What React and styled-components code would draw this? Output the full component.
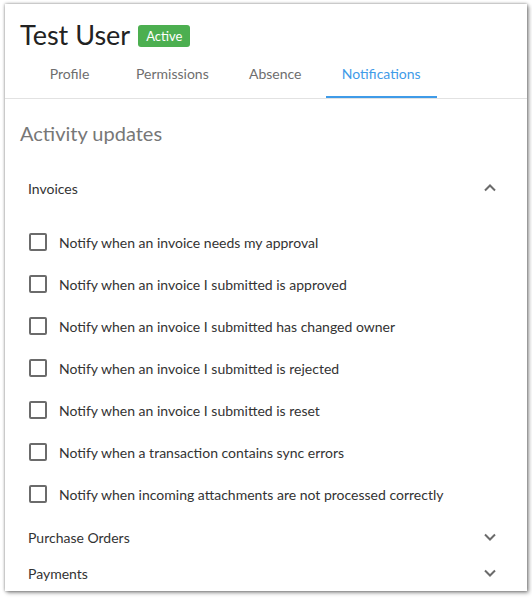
import React from 'react';
import styled, { createGlobalStyle } from 'styled-components';

const GlobalStyle = createGlobalStyle`
  html, body {
    margin: 0;
    padding: 0;
    background: #ffffff;
    font-family: Lato, "Open Sans", Arial, sans-serif;
  }
`;

const invoiceOptions = [
  'Notify when an invoice needs my approval',
  'Notify when an invoice I submitted is approved',
  'Notify when an invoice I submitted has changed owner',
  'Notify when an invoice I submitted is rejected',
  'Notify when an invoice I submitted is reset',
  'Notify when a transaction contains sync errors',
  'Notify when incoming attachments are not processed correctly',
];

const tabs = ['Profile', 'Permissions', 'Absence', 'Notifications'];

const Chevron = ({ up }) => (
  <svg width='24' height='24' viewBox='0 0 24 24'>
    <path
      d={up ? 'M7 14.5l5-5 5 5' : 'M7 9.5l5 5 5-5'}
      fill='none'
      stroke='#6b6b6b'
      strokeWidth='2'
    />
  </svg>
);

const App = () => {
  return (
    <Page>
      <GlobalStyle />
      <Card>
        <Header>
          <TitleRow>
            <UserName>Test User</UserName>
            <Badge>Active</Badge>
          </TitleRow>
          <TabList>
            {tabs.map((t) => (
              <Tab key={t} $active={t === 'Notifications'}>
                {t}
              </Tab>
            ))}
          </TabList>
        </Header>
        <Content>
          <SectionTitle>Activity updates</SectionTitle>
          <AccordionHead>
            <AccordionLabel>Invoices</AccordionLabel>
            <Chevron up />
          </AccordionHead>
          <AccordionBody>
            {invoiceOptions.map((o) => (
              <CheckRow key={o}>
                <CheckBox />
                <CheckLabel>{o}</CheckLabel>
              </CheckRow>
            ))}
          </AccordionBody>
          <AccordionHead>
            <AccordionLabel>Purchase Orders</AccordionLabel>
            <Chevron />
          </AccordionHead>
          <AccordionHead>
            <AccordionLabel>Payments</AccordionLabel>
            <Chevron />
          </AccordionHead>
        </Content>
      </Card>
    </Page>
  );
};

export default App;

const Page = styled.div`
  padding: 4px 5px;
  width: 532px;
  height: 598px;
  box-sizing: border-box;
  overflow: hidden;
`;

const Card = styled.div`
  width: 522px;
  height: 587px;
  background: #ffffff;
  box-shadow: 0 0 3px rgba(0, 0, 0, 0.45), 2px 2px 4px rgba(0, 0, 0, 0.35);
  overflow: hidden;
`;

const Header = styled.div`
  border-bottom: 1px solid #e2e2e2;
`;

const TitleRow = styled.div`
  display: flex;
  align-items: center;
  gap: 8px;
  height: 46px;
  padding: 0 15px;
  box-sizing: border-box;
  padding-top: 15px;
`;

const UserName = styled.span`
  font-size: 27px;
  line-height: 30px;
  color: #222222;
`;

const Badge = styled.span`
  display: inline-flex;
  align-items: center;
  height: 22px;
  padding: 0 8px;
  border-radius: 3px;
  background: #4caf50;
  color: #ffffff;
  font-size: 13px;
  margin-top: 2px;
`;

const TabList = styled.div`
  display: flex;
  padding-left: 14px;
`;

const Tab = styled.div`
  min-width: 101px;
  height: 48px;
  padding: 0 16px;
  box-sizing: border-box;
  display: flex;
  align-items: center;
  justify-content: center;
  font-size: 14px;
  color: ${(p) => (p.$active ? '#3f9be8' : '#6e6e6e')};
  border-bottom: 2px solid ${(p) => (p.$active ? '#3f9be8' : 'transparent')};
`;

const Content = styled.div`
  padding: 22px 15px 0 15px;
`;

const SectionTitle = styled.div`
  font-size: 20px;
  line-height: 24px;
  color: #777777;
  margin-bottom: 25px;
`;

const AccordionHead = styled.div`
  display: flex;
  align-items: center;
  justify-content: space-between;
  height: 36px;
  padding: 0 10px 0 8px;
`;

const AccordionLabel = styled.span`
  font-size: 14px;
  color: #333333;
`;

const AccordionBody = styled.div`
  padding: 15px 0 4px 0;
`;

const CheckRow = styled.label`
  display: flex;
  align-items: center;
  gap: 12px;
  height: 42px;
  padding-left: 9px;
`;

const CheckBox = styled.span`
  width: 18px;
  height: 18px;
  box-sizing: border-box;
  border: 2px solid #6b6b6b;
  border-radius: 2px;
`;

const CheckLabel = styled.span`
  font-size: 14px;
  color: #333333;
`;
